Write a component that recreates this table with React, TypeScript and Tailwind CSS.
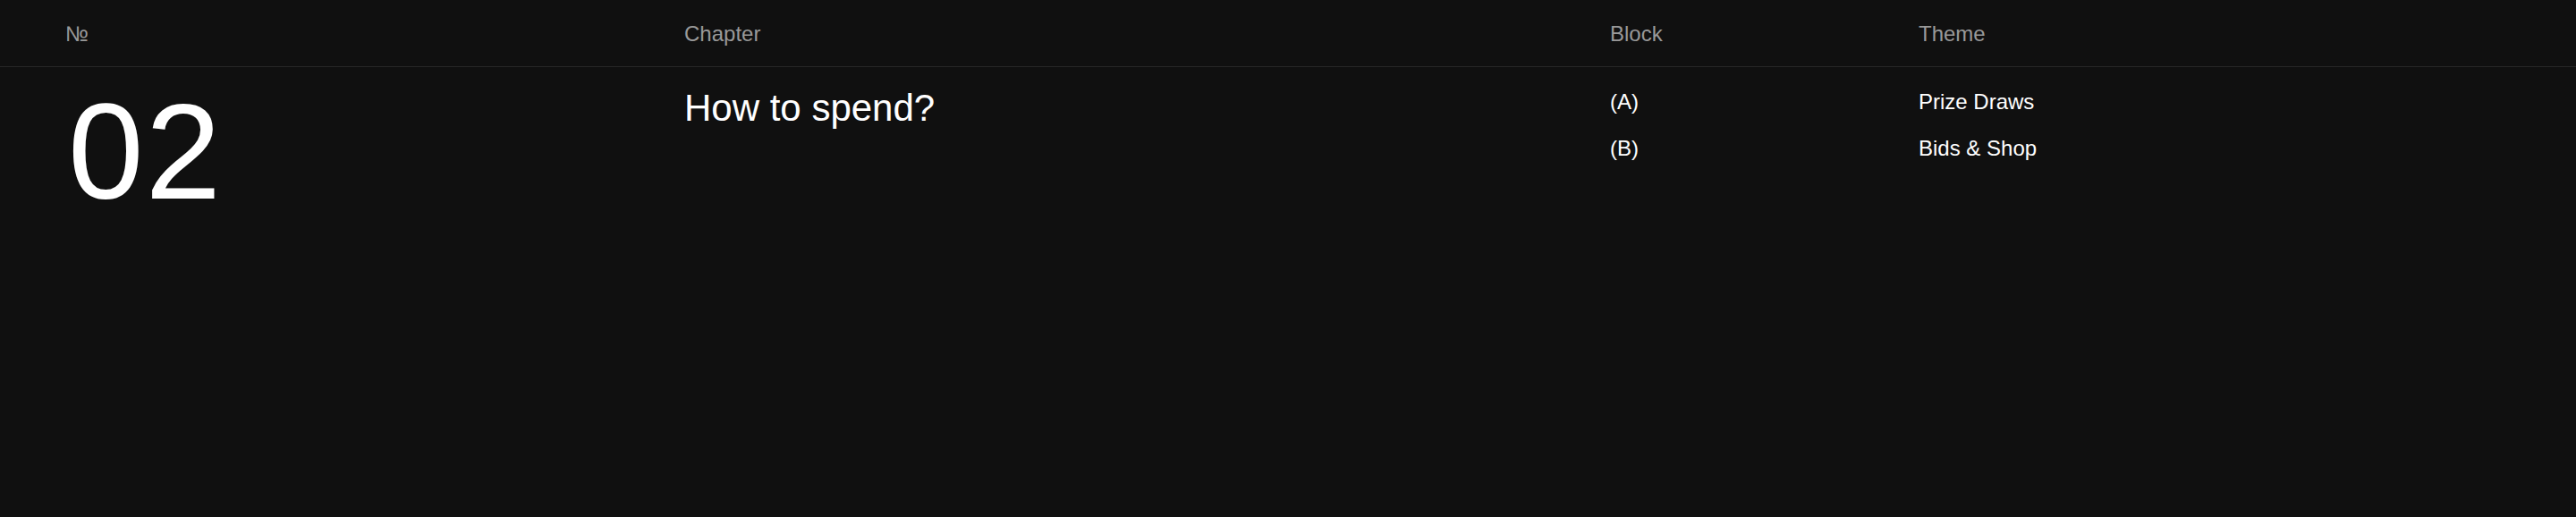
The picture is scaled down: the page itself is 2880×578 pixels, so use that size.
const rows = [
  { block: "(A)", theme: "Prize Draws" },
  { block: "(B)", theme: "Bids & Shop" },
];

function App() {
  return (
    <div className="min-h-[578px] w-full bg-[#101010] font-['Liberation_Sans',Arial,sans-serif] text-white">
      <div className="grid grid-cols-[692px_1035px_345px_1fr] border-b border-[#262626] pl-[73px] pt-[26px] pb-[24px] text-[24px] leading-none text-[#999999]">
        <div>№</div>
        <div>Chapter</div>
        <div>Block</div>
        <div>Theme</div>
      </div>
      <div className="grid grid-cols-[692px_1035px_345px_1fr] items-start pl-[73px] pt-[18px]">
        <div className="ml-[3px] text-[152px] leading-none tracking-[2px]">02</div>
        <div className="mt-[7px] text-[42px] leading-none">How to spend?</div>
        <div className="mt-[9px] flex flex-col gap-[28px] text-[24px] leading-none">
          {rows.map((r) => (
            <div key={r.block}>{r.block}</div>
          ))}
        </div>
        <div className="mt-[9px] flex flex-col gap-[28px] text-[24px] leading-none">
          {rows.map((r) => (
            <div key={r.theme}>{r.theme}</div>
          ))}
        </div>
      </div>
    </div>
  );
}

export default App;
